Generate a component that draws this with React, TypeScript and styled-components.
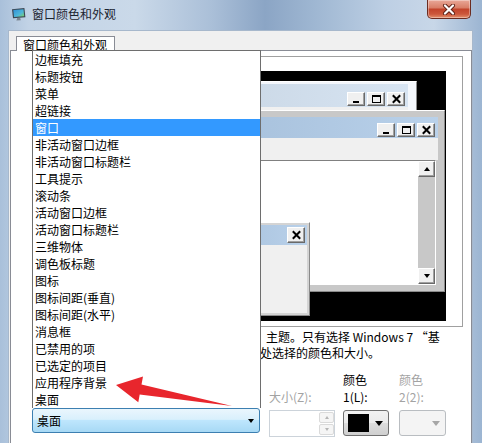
import React from "react";
import styled, { createGlobalStyle } from "styled-components";

const FONT = `"Noto Sans CJK SC", "Noto Sans", sans-serif`;

const GlobalStyle = createGlobalStyle`
  html, body {
    margin: 0;
    padding: 0;
  }
  body {
    width: 482px;
    height: 443px;
    overflow: hidden;
    font-family: ${FONT};
    font-size: 12px;
    color: #000;
  }
`;

const items = [
  "边框填充",
  "标题按钮",
  "菜单",
  "超链接",
  "窗口",
  "非活动窗口边框",
  "非活动窗口标题栏",
  "工具提示",
  "滚动条",
  "活动窗口边框",
  "活动窗口标题栏",
  "三维物体",
  "调色板标题",
  "图标",
  "图标间距(垂直)",
  "图标间距(水平)",
  "消息框",
  "已禁用的项",
  "已选定的项目",
  "应用程序背景",
  "桌面",
];

const SELECTED = 4;

const activeCaption = "linear-gradient(90deg, #99b4d1, #b9d1ea)";
const inactiveCaption = "linear-gradient(90deg, #bfcddb, #d7e4f2)";

/* ---------- icons ---------- */

const AppIcon = () => (
  <svg width="16" height="15" viewBox="0 0 16 15" style={{ marginTop: 7 }}>
    <defs>
      <linearGradient id="scr" x1="0" y1="0" x2="1" y2="1">
        <stop offset="0" stopColor="#2f8fd8" />
        <stop offset="0.6" stopColor="#4fb7d8" />
        <stop offset="1" stopColor="#7fd35a" />
      </linearGradient>
    </defs>
    <path d="M1 2.2 L13.4 1 L14.4 10.2 L2 11.2 Z" fill="#3b4652" />
    <path d="M2.3 3.1 L12.5 2.2 L13.2 9.3 L3 10.1 Z" fill="url(#scr)" />
    <path d="M6.2 11.1 L9.2 10.9 L9.8 13.2 L5.4 13.6 Z" fill="#7a858f" />
  </svg>
);

const CloseGlyph = () => (
  <svg width="14" height="11" viewBox="0 0 14 11">
    <path d="M3 1.5 L11 9.5 M11 1.5 L3 9.5" stroke="#5e2116" strokeWidth="4" strokeLinecap="round" />
    <path d="M3 1.5 L11 9.5 M11 1.5 L3 9.5" stroke="#fff" strokeWidth="2.2" strokeLinecap="round" />
  </svg>
);

type GlyphKind = "min" | "max" | "close";

const CapGlyph: React.FC<{ kind: GlyphKind }> = ({ kind }) => (
  <svg width="11" height="10" viewBox="0 0 11 10">
    {kind === "min" && <rect x="2" y="7" width="6" height="2" fill="#000" />}
    {kind === "max" && (
      <>
        <rect x="1.5" y="1.5" width="8" height="7" fill="none" stroke="#000" strokeWidth="1" />
        <rect x="1" y="1" width="9" height="2" fill="#000" />
      </>
    )}
    {kind === "close" && (
      <path d="M1.8 1.2 L9.2 8.8 M9.2 1.2 L1.8 8.8" stroke="#000" strokeWidth="2" />
    )}
  </svg>
);

/* ---------- window chrome ---------- */

const Frame = styled.div`
  position: relative;
  width: 482px;
  height: 443px;
  display: flex;
  flex-direction: column;
  overflow: hidden;
  background: linear-gradient(
    90deg,
    #a9c0da 0%,
    #c2d3e6 6%,
    #cad9e9 28%,
    #aabfd8 44%,
    #8ba5c5 55%,
    #a0b8d3 66%,
    #bdcfe4 80%,
    #c8d7e8 90%,
    #9cb5d2 100%
  );
`;

const TitleBar = styled.div`
  height: 30px;
  flex-shrink: 0;
  display: flex;
  align-items: flex-start;
  padding-left: 11px;
`;

const TitleText = styled.span`
  margin: 6px 0 0 5px;
  font-size: 12px;
  line-height: 16px;
  color: #1b2430;
`;

const CloseButton = styled.div`
  margin-left: auto;
  margin-right: 11px;
  width: 44px;
  height: 19px;
  box-sizing: border-box;
  border: 1px solid #6b2c21;
  border-top: none;
  border-radius: 0 0 5px 5px;
  background: linear-gradient(#e9a898 0%, #d98069 42%, #c3452c 52%, #cc573b 78%, #e3906c 100%);
  box-shadow: inset 0 0 0 1px rgba(255, 255, 255, 0.35);
  display: flex;
  align-items: center;
  justify-content: center;
`;

const Client = styled.div`
  flex: 1;
  min-height: 0;
  margin: 0 9px 0 8px;
  background: #f0f0f0;
  border: 1px solid #a7b8cc;
  border-bottom: none;
  padding: 5px 0 0 1px;
  display: flex;
  flex-direction: column;
`;

const TabStrip = styled.div`
  display: flex;
  padding-left: 6px;
`;

const TabHeader = styled.div`
  position: relative;
  z-index: 1;
  height: 15px;
  margin-bottom: -1px;
  box-sizing: border-box;
  border: 1px solid #898c95;
  border-bottom: none;
  background: #fff;
  padding: 0 7px 0 6px;
  font-size: 12px;
  line-height: 15px;
  white-space: nowrap;
`;

const TabPage = styled.div`
  flex: 1;
  background: #fff;
  border: 1px solid #898c95;
  border-bottom: none;
  padding: 5px 8px 0 7px;
  display: flex;
  flex-direction: column;
`;

/* ---------- preview ---------- */

const PreviewBox = styled.div`
  height: 271px;
  flex-shrink: 0;
  box-sizing: border-box;
  margin-left: 16px;
  border: 1px solid #a0a0a0;
  background: #fff;
  padding: 14px 16px 5px 7px;
`;

const Desktop = styled.div`
  position: relative;
  height: 100%;
  background: #000;
  overflow: hidden;
`;

const MiniWindow = styled.div<{
  $x: number;
  $y: number;
  $w: number;
  $h: number;
  $frame: string;
  $pad: string;
}>`
  position: absolute;
  left: ${(p) => p.$x}px;
  top: ${(p) => p.$y}px;
  width: ${(p) => p.$w}px;
  height: ${(p) => p.$h}px;
  box-sizing: border-box;
  background: ${(p) => p.$frame};
  border: 1px solid;
  border-color: #ffffff #8a8a8a #8a8a8a #ffffff;
  padding: ${(p) => p.$pad};
  display: flex;
  flex-direction: column;
`;

const Caption = styled.div<{ $h: number; $bg: string; $padR: number; $end?: boolean }>`
  height: ${(p) => p.$h}px;
  flex-shrink: 0;
  background: ${(p) => p.$bg};
  display: flex;
  align-items: ${(p) => (p.$end ? "flex-end" : "center")};
  justify-content: flex-end;
  padding: 0 ${(p) => p.$padR}px ${(p) => (p.$end ? 1 : 0)}px 4px;
  box-sizing: border-box;
`;

const CaptionButtons = styled.div`
  display: flex;
  gap: 2px;
`;

const CapButton = styled.div<{ $w?: number; $h?: number }>`
  width: ${(p) => p.$w ?? 18}px;
  height: ${(p) => p.$h ?? 14}px;
  box-sizing: border-box;
  background: #f0f0f0;
  border: 1px solid;
  border-color: #ffffff #696969 #696969 #ffffff;
  box-shadow: inset -1px -1px 0 #a0a0a0;
  display: flex;
  align-items: center;
  justify-content: center;
`;

const WindowBody = styled.div`
  flex: 1;
  background: #f0f0f0;
`;

const MenuBar = styled.div`
  height: 22px;
  flex-shrink: 0;
  background: #f0f0f0;
`;

const TextField = styled.div`
  flex: 1;
  margin-right: 2px;
  display: flex;
  background: #fff;
  border: 1px solid;
  border-color: #808080 #ffffff #ffffff #808080;
`;

const FieldArea = styled.div`
  flex: 1;
`;

const ScrollBar = styled.div`
  width: 17px;
  background: #c8c8c8;
  display: flex;
  flex-direction: column;
  justify-content: space-between;
`;

const ScrollButton = styled(CapButton)`
  width: 17px;
  height: 16px;
`;

const Tri = styled.span<{ $w: number; $h: number; $color: string; $up?: boolean }>`
  display: block;
  width: 0;
  height: 0;
  border-left: ${(p) => p.$w / 2}px solid transparent;
  border-right: ${(p) => p.$w / 2}px solid transparent;
  ${(p) =>
    p.$up
      ? `border-bottom: ${p.$h}px solid ${p.$color};`
      : `border-top: ${p.$h}px solid ${p.$color};`}
`;

const CaptionControls: React.FC<{ closeOnly?: boolean }> = ({ closeOnly }) => (
  <CaptionButtons>
    {!closeOnly && (
      <CapButton>
        <CapGlyph kind="min" />
      </CapButton>
    )}
    {!closeOnly && (
      <CapButton>
        <CapGlyph kind="max" />
      </CapButton>
    )}
    <CapButton $h={closeOnly ? 16 : 14}>
      <CapGlyph kind="close" />
    </CapButton>
  </CaptionButtons>
);

/* ---------- description and controls ---------- */

const Description = styled.div`
  margin-top: 2px;
  font-size: 12px;
  line-height: 16px;
`;

const DescLine = styled.div<{ $indent: number }>`
  padding-left: ${(p) => p.$indent}px;
  white-space: nowrap;
`;

const ControlsRow = styled.div`
  margin-top: 10px;
  display: flex;
  align-items: flex-start;
`;

const FieldGroup = styled.div<{ $w: number; $gap: number }>`
  width: ${(p) => p.$w}px;
  margin-left: ${(p) => p.$gap}px;
  display: flex;
  flex-direction: column;
`;

const FieldLabel = styled.div<{ $disabled?: boolean; $h?: number }>`
  height: ${(p) => p.$h ?? 34}px;
  margin-bottom: 5px;
  display: flex;
  flex-direction: column;
  justify-content: flex-end;
  font-size: 12px;
  line-height: 17px;
  white-space: nowrap;
  color: ${(p) => (p.$disabled ? "#a3a3a3" : "#000")};
`;

const ComboWrap = styled.div`
  position: relative;
`;

const Combo = styled.div`
  height: 25px;
  box-sizing: border-box;
  border: 1px solid #3c7fb1;
  border-radius: 3px;
  background: linear-gradient(#eaf6fd 0%, #d9f0fc 45%, #bee6fd 50%, #a7d9f5 100%);
  display: flex;
  align-items: center;
  justify-content: space-between;
  padding: 0 5px 0 4px;
  font-size: 12px;
`;

const DropList = styled.div`
  position: absolute;
  z-index: 5;
  left: 0;
  bottom: 100%;
  width: 229px;
  box-sizing: border-box;
  background: #fff;
  border: 1px solid #6e6e6e;
  border-bottom: none;
`;

const ListItem = styled.div<{ $selected?: boolean }>`
  height: 17px;
  line-height: 17px;
  padding-left: 2px;
  font-size: 12px;
  white-space: nowrap;
  color: ${(p) => (p.$selected ? "#fff" : "#000")};
  background: ${(p) => (p.$selected ? "#3399ff" : "transparent")};
`;

const SpinBox = styled.div`
  height: 27px;
  box-sizing: border-box;
  border: 1px solid #ccd3da;
  background: #fff;
  display: flex;
  justify-content: flex-end;
  padding: 1px 0;
`;

const SpinButtons = styled.div`
  width: 15px;
  display: flex;
  flex-direction: column;
  gap: 1px;
`;

const SpinButton = styled.div`
  flex: 1;
  box-sizing: border-box;
  border: 1px solid #dadada;
  border-radius: 2px;
  background: #f5f5f5;
  display: flex;
  align-items: center;
  justify-content: center;
`;

const ColorButton = styled.div<{ $disabled?: boolean }>`
  height: 26px;
  box-sizing: border-box;
  border: 1px solid ${(p) => (p.$disabled ? "#b9bdc1" : "#707070")};
  border-radius: 3px;
  background: ${(p) =>
    p.$disabled
      ? "#f4f4f4"
      : "linear-gradient(#f2f2f2 0%, #ebebeb 50%, #dddddd 51%, #cfcfcf 100%)"};
  display: flex;
  align-items: center;
  justify-content: ${(p) => (p.$disabled ? "flex-end" : "flex-start")};
  padding: 0 5px 0 4px;
`;

const Swatch = styled.div`
  width: 22px;
  height: 18px;
  background: #000;
  margin-right: 6px;
`;

const RedArrow = styled.svg`
  position: absolute;
  z-index: 10;
  left: 110px;
  top: 370px;
  width: 130px;
  height: 40px;
`;

export default function App() {
  return (
    <>
      <GlobalStyle />
      <Frame>
        <TitleBar>
          <AppIcon />
          <TitleText>窗口颜色和外观</TitleText>
          <CloseButton>
            <CloseGlyph />
          </CloseButton>
        </TitleBar>

        <Client>
          <TabStrip>
            <TabHeader>窗口颜色和外观</TabHeader>
          </TabStrip>

          <TabPage>
            <PreviewBox>
              <Desktop>
                <MiniWindow $x={18} $y={10} $w={357} $h={150} $frame="#f4f7fc" $pad="2px 8px 6px 6px">
                  <Caption $h={23} $bg={inactiveCaption} $padR={3} $end>
                    <CaptionControls />
                  </Caption>
                  <WindowBody />
                </MiniWindow>

                <MiniWindow $x={8} $y={39} $w={395} $h={182} $frame="#c8c8c8" $pad="6px">
                  <Caption $h={21} $bg={activeCaption} $padR={3} $end>
                    <CaptionControls />
                  </Caption>
                  <MenuBar />
                  <TextField>
                    <FieldArea />
                    <ScrollBar>
                      <ScrollButton>
                        <Tri $w={7} $h={4} $color="#000" $up />
                      </ScrollButton>
                      <ScrollButton>
                        <Tri $w={7} $h={4} $color="#000" />
                      </ScrollButton>
                    </ScrollBar>
                  </TextField>
                </MiniWindow>

                <MiniWindow $x={108} $y={151} $w={160} $h={94} $frame="#d4d4d4" $pad="2px">
                  <Caption $h={20} $bg={activeCaption} $padR={2}>
                    <CaptionControls closeOnly />
                  </Caption>
                  <WindowBody />
                </MiniWindow>
              </Desktop>
            </PreviewBox>

            <Description>
              <DescLine $indent={248}>主题。只有选择 Windows 7 “基</DescLine>
              <DescLine $indent={242}>处选择的颜色和大小。</DescLine>
            </Description>

            <ControlsRow>
              <FieldGroup $w={228} $gap={14}>
                <FieldLabel $h={32} />
                <ComboWrap>
                  <DropList>
                    {items.map((item, i) => (
                      <ListItem key={item} $selected={i === SELECTED}>
                        {item}
                      </ListItem>
                    ))}
                  </DropList>
                  <Combo>
                    <span>桌面</span>
                    <Tri $w={7} $h={4} $color="#000" />
                  </Combo>
                </ComboWrap>
              </FieldGroup>

              <FieldGroup $w={66} $gap={9}>
                <FieldLabel $disabled>大小(Z):</FieldLabel>
                <SpinBox>
                  <SpinButtons>
                    <SpinButton>
                      <Tri $w={5} $h={3} $color="#b5b5b5" $up />
                    </SpinButton>
                    <SpinButton>
                      <Tri $w={5} $h={3} $color="#b5b5b5" />
                    </SpinButton>
                  </SpinButtons>
                </SpinBox>
              </FieldGroup>

              <FieldGroup $w={46} $gap={8}>
                <FieldLabel>
                  <span>颜色</span>
                  <span>1(L):</span>
                </FieldLabel>
                <ColorButton>
                  <Swatch />
                  <Tri $w={9} $h={5} $color="#000" />
                </ColorButton>
              </FieldGroup>

              <FieldGroup $w={47} $gap={10}>
                <FieldLabel $disabled>
                  <span>颜色</span>
                  <span>2(2):</span>
                </FieldLabel>
                <ColorButton $disabled>
                  <Tri $w={9} $h={5} $color="#a6a6a6" />
                </ColorButton>
              </FieldGroup>
            </ControlsRow>
          </TabPage>
        </Client>

        <RedArrow viewBox="0 0 130 40">
          <polygon
            points="6,15 33,6.5 31.5,14.6 122,36 29.7,24.4 28.3,32.3"
            fill="#e8262d"
          />
        </RedArrow>
      </Frame>
    </>
  );
}
